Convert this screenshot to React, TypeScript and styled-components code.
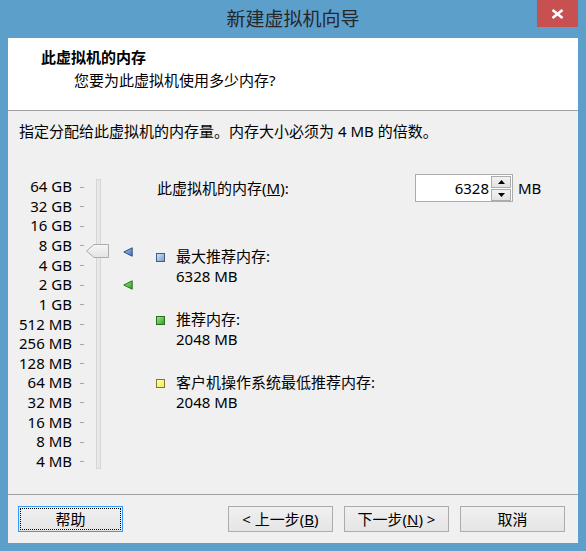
import styled, { createGlobalStyle } from 'styled-components'

const GlobalStyle = createGlobalStyle`
  html, body {
    margin: 0;
    padding: 0;
    background: #ffffff;
  }
  body {
    font-family: 'Noto Sans', 'Noto Sans CJK SC', sans-serif;
    font-size: 15px;
    color: #000;
  }
`

const sizes = [
  '64 GB', '32 GB', '16 GB', '8 GB', '4 GB', '2 GB', '1 GB',
  '512 MB', '256 MB', '128 MB', '64 MB', '32 MB', '16 MB', '8 MB', '4 MB',
]

const legend = [
  { kind: 'max', label: '最大推荐内存:', value: '6328 MB' },
  { kind: 'rec', label: '推荐内存:', value: '2048 MB' },
  { kind: 'min', label: '客户机操作系统最低推荐内存:', value: '2048 MB' },
] as const

type Kind = 'max' | 'rec' | 'min'

const swatch: Record<Kind, { border: string; top: string; bottom: string }> = {
  max: { border: '#3d5d8c', top: '#d3e0f3', bottom: '#7e9ccb' },
  rec: { border: '#2c6b24', top: '#9be47c', bottom: '#36a52a' },
  min: { border: '#7d7a2c', top: '#ffffb4', bottom: '#efec55' },
}

export default function App() {
  return (
    <>
      <GlobalStyle />
      <Window>
        <TitleBar>
          <span />
          <Title>新建虚拟机向导</Title>
          <CloseButton>
            <svg width="13" height="10" viewBox="0 0 13 10">
              <path d="M1.5 1 L11.5 9 M11.5 1 L1.5 9" stroke="#fff" strokeWidth="2.6" />
            </svg>
          </CloseButton>
        </TitleBar>
        <Panel>
          <Header>
            <Heading>此虚拟机的内存</Heading>
            <SubHeading>您要为此虚拟机使用多少内存?</SubHeading>
          </Header>
          <Body>
            <Intro>指定分配给此虚拟机的内存量。内存大小必须为 4 MB 的倍数。</Intro>
            <Main>
              <Slider>
                <Scale>
                  {sizes.map((s) => (
                    <ScaleRow key={s}>
                      <ScaleLabel>{s}</ScaleLabel>
                      <Tick />
                    </ScaleRow>
                  ))}
                </Scale>
                <TrackWrap>
                  <Track />
                  <Thumb width="23" height="14" viewBox="0 0 23 14">
                    <defs>
                      <linearGradient id="thumbFill" x1="0" y1="0" x2="0" y2="1">
                        <stop offset="0" stopColor="#f6f6f6" />
                        <stop offset="1" stopColor="#e3e3e3" />
                      </linearGradient>
                    </defs>
                    <polygon
                      points="0.5,7 8,0.5 22.5,0.5 22.5,13.5 8,13.5"
                      fill="url(#thumbFill)"
                      stroke="#acacac"
                    />
                  </Thumb>
                  <Marker $top={68} width="10" height="10" viewBox="0 0 10 10">
                    <defs>
                      <linearGradient id="blueFill" x1="0" y1="0" x2="1" y2="1">
                        <stop offset="0" stopColor="#b5cbee" />
                        <stop offset="1" stopColor="#3e6db3" />
                      </linearGradient>
                    </defs>
                    <polygon points="0.8,5 9.2,0.8 9.2,9.2" fill="url(#blueFill)" stroke="#2d4f88" strokeWidth="1" />
                  </Marker>
                  <Marker $top={101} width="10" height="10" viewBox="0 0 10 10">
                    <defs>
                      <linearGradient id="greenFill" x1="0" y1="0" x2="1" y2="1">
                        <stop offset="0" stopColor="#a9ec90" />
                        <stop offset="1" stopColor="#2b9c24" />
                      </linearGradient>
                    </defs>
                    <polygon points="0.8,5 9.2,0.8 9.2,9.2" fill="url(#greenFill)" stroke="#22751c" strokeWidth="1" />
                  </Marker>
                </TrackWrap>
              </Slider>
              <Info>
                <MemoryRow>
                  <FieldLabel>
                    此虚拟机的内存(<u>M</u>):
                  </FieldLabel>
                  <SpinBox>
                    <SpinValue>6328</SpinValue>
                    <SpinButtons>
                      <SpinButton>
                        <svg width="7" height="4" viewBox="0 0 7 4">
                          <polygon points="3.5,0 7,4 0,4" fill="#000" />
                        </svg>
                      </SpinButton>
                      <SpinButton>
                        <svg width="7" height="4" viewBox="0 0 7 4">
                          <polygon points="0,0 7,0 3.5,4" fill="#000" />
                        </svg>
                      </SpinButton>
                    </SpinButtons>
                  </SpinBox>
                  <Unit>MB</Unit>
                </MemoryRow>
                <Legend>
                  {legend.map((item) => (
                    <LegendItem key={item.kind}>
                      <Swatch $kind={item.kind} />
                      <LegendText>
                        <div>{item.label}</div>
                        <div>{item.value}</div>
                      </LegendText>
                    </LegendItem>
                  ))}
                </Legend>
              </Info>
            </Main>
          </Body>
          <Footer>
            <Button $focused>帮助</Button>
            <Spacer />
            <Button>
              &lt; 上一步(<u>B</u>)
            </Button>
            <Button>
              下一步(<u>N</u>) &gt;
            </Button>
            <Button>取消</Button>
          </Footer>
        </Panel>
      </Window>
    </>
  )
}

const Window = styled.div`
  width: 586px;
  height: 551px;
  box-sizing: border-box;
  background: #5d9fcb;
  padding: 0 8px 8px;
  display: flex;
  flex-direction: column;
`

const TitleBar = styled.div`
  height: 38px;
  flex-shrink: 0;
  display: grid;
  grid-template-columns: 1fr auto 1fr;
  align-items: start;
`

const Title = styled.div`
  font-size: 19px;
  line-height: 38px;
  color: #262626;
`

const CloseButton = styled.div`
  justify-self: end;
  width: 41px;
  height: 27px;
  background: #c75050;
  display: flex;
  align-items: center;
  justify-content: center;
`

const Panel = styled.div`
  flex: 1;
  display: flex;
  flex-direction: column;
  background: #f0f0f0;
`

const Header = styled.div`
  height: 72px;
  box-sizing: content-box;
  background: #fff;
  border-bottom: 1px solid #a0a0a0;
  padding-left: 33px;
  padding-top: 0;
`

const Heading = styled.div`
  font-weight: bold;
  line-height: 20px;
  margin-top: 9px;
`

const SubHeading = styled.div`
  line-height: 20px;
  margin-top: 3px;
  padding-left: 33px;
`

const Body = styled.div`
  flex: 1;
  padding: 10px 11px 0;
`

const Intro = styled.div`
  line-height: 20px;
`

const Main = styled.div`
  display: flex;
  align-items: flex-start;
  margin-top: 33px;
`

const Slider = styled.div`
  display: flex;
  align-items: flex-start;
`

const Scale = styled.div`
  display: grid;
  grid-auto-rows: 19.64px;
  padding-top: 3.2px;
`

const ScaleRow = styled.div`
  display: flex;
  align-items: center;
`

const ScaleLabel = styled.span`
  width: 53px;
  text-align: right;
  line-height: 19.64px;
  white-space: nowrap;
`

const Tick = styled.span`
  width: 4px;
  height: 1px;
  margin-left: 8px;
  background: #a6a6a6;
`

const TrackWrap = styled.div`
  position: relative;
  margin-left: 12px;
  margin-top: 5px;
`

const Track = styled.div`
  width: 5px;
  height: 290px;
  box-sizing: border-box;
  background: #e7e7e7;
  border: 1px solid #d6d6d6;
`

const Thumb = styled.svg`
  position: absolute;
  left: -10px;
  top: 65px;
`

const Marker = styled.svg<{ $top: number }>`
  position: absolute;
  left: 27px;
  top: ${(p) => p.$top}px;
`

const Info = styled.div`
  margin-left: 54px;
  display: flex;
  flex-direction: column;
`

const MemoryRow = styled.div`
  display: grid;
  grid-template-columns: 260px auto auto;
  align-items: center;
  height: 28px;
`

const FieldLabel = styled.span`
  padding-left: 2px;
  line-height: 20px;
  white-space: nowrap;
`

const SpinBox = styled.div`
  width: 98px;
  height: 28px;
  box-sizing: border-box;
  border: 1px solid #acacac;
  background: #fff;
  display: flex;
  align-items: center;
  padding-right: 1px;
`

const SpinValue = styled.span`
  flex: 1;
  text-align: right;
  padding-right: 2px;
  line-height: 20px;
`

const SpinButtons = styled.div`
  display: flex;
  flex-direction: column;
  gap: 1px;
`

const SpinButton = styled.div`
  width: 20px;
  height: 12px;
  box-sizing: border-box;
  border: 1px solid #acacac;
  background: linear-gradient(#f2f2f2, #e3e3e3);
  display: flex;
  align-items: center;
  justify-content: center;
`

const Unit = styled.span`
  margin-left: 5px;
  line-height: 20px;
`

const Legend = styled.div`
  display: flex;
  flex-direction: column;
  gap: 23px;
  margin-top: 44px;
`

const LegendItem = styled.div`
  display: flex;
  align-items: flex-start;
`

const Swatch = styled.span<{ $kind: Kind }>`
  width: 9px;
  height: 9px;
  box-sizing: border-box;
  margin-top: 7px;
  margin-left: 1px;
  border: 1px solid ${(p) => swatch[p.$kind].border};
  background: linear-gradient(135deg, ${(p) => swatch[p.$kind].top}, ${(p) => swatch[p.$kind].bottom});
`

const LegendText = styled.div`
  margin-left: 11px;
  line-height: 20px;
`

const Footer = styled.div`
  display: flex;
  align-items: center;
  gap: 11px;
  border-top: 1px solid #a0a0a0;
  padding: 11px 13px 11px 10px;
`

const Spacer = styled.div`
  flex: 1;
`

const Button = styled.div<{ $focused?: boolean }>`
  width: 105px;
  height: 26px;
  box-sizing: border-box;
  border: 1px solid ${(p) => (p.$focused ? '#3399ff' : '#acacac')};
  background: linear-gradient(#f0f0f0, #e5e5e5);
  display: flex;
  align-items: center;
  justify-content: center;
  line-height: 20px;
  white-space: nowrap;
  outline: ${(p) => (p.$focused ? '1px dotted #000' : 'none')};
  outline-offset: -3px;
`
